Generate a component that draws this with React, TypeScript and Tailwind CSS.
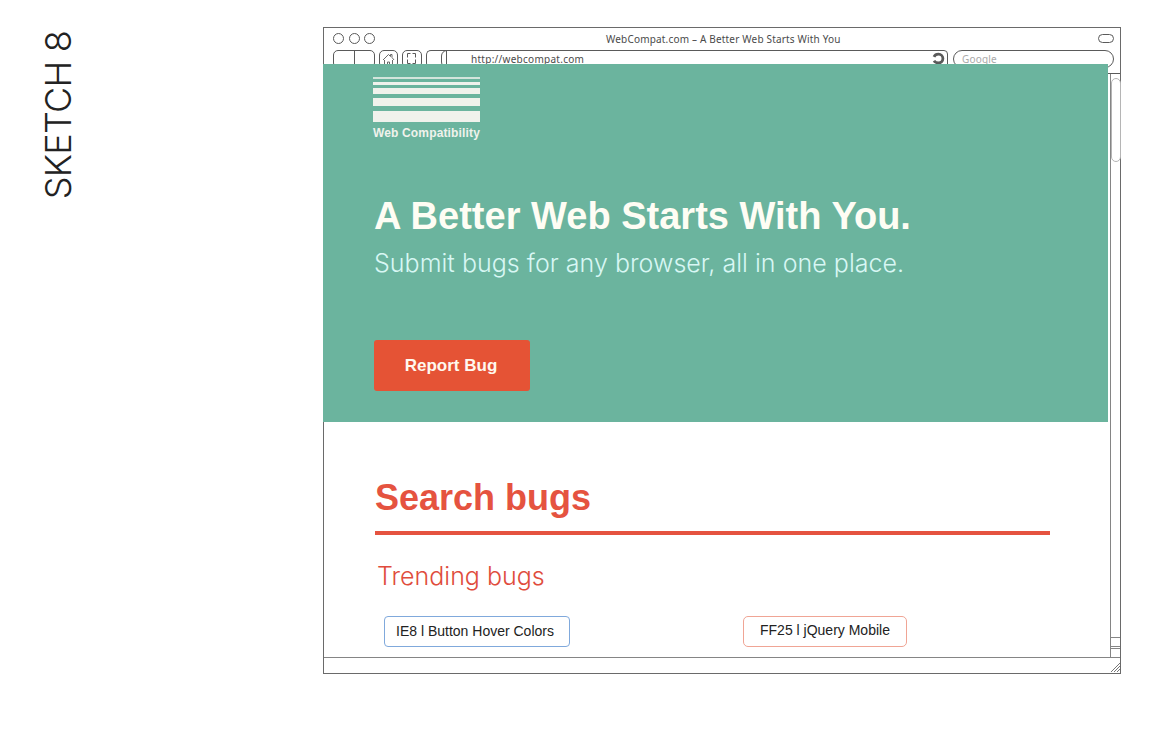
import React from "react";

const HELV = "font-['Liberation_Sans',Arial,sans-serif]";
const LIGHT = "font-['Inter',sans-serif] font-light";
const CHROME = "font-['Noto_Sans',sans-serif] text-[#4a4a4a]";

function TitleBar() {
  return (
    <div className="flex h-[22px] shrink-0 items-center justify-between pr-[6px] pl-[9px]">
      <div className="flex w-[273px] gap-[4.5px] pb-[2px]">
        <span className="size-[11px] rounded-full border border-[#5a5a5a]" />
        <span className="size-[11px] rounded-full border border-[#5a5a5a]" />
        <span className="size-[11px] rounded-full border border-[#5a5a5a]" />
      </div>
      <span className={`${CHROME} flex-1 text-[10px] leading-[22px] tracking-[0.18px] whitespace-nowrap`}>
        WebCompat.com – A Better Web Starts With You
      </span>
      <span className="mb-[2px] h-[9px] w-[16px] rounded-full border border-[#5a5a5a]" />
    </div>
  );
}

function Toolbar() {
  return (
    <div className="flex h-[24px] shrink-0 border-b border-[#5a5a5a] pl-[9px]">
      <div className="flex h-[18px] w-[42px] rounded-[5px] border border-[#5a5a5a]">
        <span className="w-[21px] border-r border-[#5a5a5a]" />
      </div>
      <div className="ml-[4px] h-[18px] w-[19px] rounded-[5px] border border-[#5a5a5a]">
        <svg viewBox="0 0 17 16" className="h-[16px] w-[17px]" fill="none" stroke="#5a5a5a">
          <path d="M3 9 8.500 3.500l2 2v-2H12v3L14 9M4.500 9v6M12.500 9v6M7.500 15v-4h2v4" strokeWidth=".9" />
        </svg>
      </div>
      <div className="ml-[4px] h-[18px] w-[20px] rounded-[5px] border border-[#5a5a5a]">
        <svg viewBox="0 0 18 16" className="h-[16px] w-[18px]" fill="none" stroke="#5a5a5a">
          <path d="M4.500 6.500v-4h3M9.500 2.500h3v4M4.500 8.500v4h3M9.500 12.500h3v-4" />
        </svg>
      </div>
      <div className="ml-[4px] h-[18px] w-[22px] rounded-l-[5px] border border-r-0 border-[#5a5a5a]" />
      <div className="-ml-[7px] flex h-[18px] w-[507px] rounded-l-[6px] rounded-r-[4px] border border-[#5a5a5a]">
        <span className="w-[5px] border-r border-[#5a5a5a]" />
        <span className={`${CHROME} ml-[24px] flex-1 text-[10px] leading-[17px] tracking-[0.27px]`}>
          http://webcompat.com
        </span>
        <svg viewBox="0 0 14 14" className="mt-[1px] mr-[1px] size-[14px]" fill="none" stroke="#5a5a5a">
          <path d="M2 4.800C3 2.600 5 2.200 6.500 2.200A4.400 4.400 0 0 1 6.500 11C4.500 11 3 10.300 2 8.800" strokeWidth="2.800" />
        </svg>
      </div>
      <div className="ml-[5px] flex h-[18px] w-[161px] rounded-full border border-[#5a5a5a] pl-[8px]">
        <span className="font-['Noto_Sans',sans-serif] text-[10px] leading-[17px] tracking-[0.2px] text-[#a9a9a9]">Google</span>
      </div>
    </div>
  );
}

function Logo() {
  return (
    <div className="w-[107px] text-[#f0f2ec]">
      <div className="flex flex-col">
        <span className="h-[2px] bg-[#d3e5dc]" />
        <span className="mt-[3px] h-[3px] bg-[#f0f2ec]" />
        <span className="mt-[3px] h-[6px] bg-[#f0f2ec]" />
        <span className="mt-[4px] h-[8px] bg-[#f0f2ec]" />
        <span className="mt-[5px] h-[11px] bg-[#f0f2ec]" />
      </div>
      <div className={`${HELV} mt-[4px] text-[12px] leading-[14px] font-bold tracking-[0.15px] whitespace-nowrap`}>
        Web Compatibility
      </div>
    </div>
  );
}

function Hero() {
  return (
    <section className="h-[358px] w-[785px] bg-[#6bb49e] pt-[13px] pl-[50px]">
      <Logo />
      <h1 className={`${HELV} mt-[54px] ml-px text-[38px] leading-[44px] font-bold tracking-[0.01px] whitespace-nowrap text-[#fefdf4]`}>
        A Better Web Starts With You.
      </h1>
      <p className={`${LIGHT} mt-[8px] ml-px text-[25px] leading-[34px] tracking-[0.03px] whitespace-nowrap text-[#d8f7f4]`}>
        Submit bugs for any browser, all in one place.
      </p>
      <button className={`${HELV} mt-[60px] ml-px h-[51px] w-[156px] rounded-[3px] bg-[#e55335] pr-[2px] text-[17px] font-bold text-[#fff8ee]`}>
        Report Bug
      </button>
    </section>
  );
}

function Bugs() {
  return (
    <section className="pl-[52px]">
      <h2 className={`${HELV} mt-[54px] text-[36px] leading-[44px] font-bold whitespace-nowrap text-[#e55340]`}>
        Search bugs
      </h2>
      <div className="mt-[11px] h-[4px] w-[675px] bg-[#e55340]" />
      <h3 className={`${LIGHT} mt-[24px] ml-[2px] text-[25px] leading-[34px] whitespace-nowrap text-[#e04c3c]`}>
        Trending bugs
      </h3>
      <div className={`${HELV} mt-[23px] ml-[9px] flex text-[14px] text-[#222222]`}>
        <div className="flex h-[31px] w-[186px] items-center rounded-[4px] border border-[#80a9dc] pl-[11px] whitespace-nowrap">
          IE8 l Button Hover Colors
        </div>
        <div className="ml-[173px] flex h-[31px] w-[164px] items-center rounded-[5px] border border-[#f0a595] pb-[2px] pl-[16px] whitespace-nowrap">
          FF25 l jQuery Mobile
        </div>
      </div>
    </section>
  );
}

function Scrollbar() {
  return (
    <aside className="flex w-[10px] flex-col border-l border-[#858585]">
      <div className="mt-[4px] h-[84px] w-[10px] rounded-full border border-[#b5b5b5]" />
      <div className="flex-1" />
      <div className="h-[10px] border-t border-b border-[#858585]" />
      <div className="mt-px h-[9px] border-t border-[#858585]" />
    </aside>
  );
}

export default function App() {
  return (
    <main className="flex h-[730px] w-[1150px] overflow-hidden bg-white">
      <div className="flex w-[323px] pt-[31px] pl-[35px]">
        <div className="h-[176px] w-[46px]">
          <p className={`${LIGHT} rotate-180 text-[36px] leading-[46px] tracking-[-0.75px] whitespace-nowrap text-[#222222] [writing-mode:vertical-rl]`}>
            SKETCH 8
          </p>
        </div>
      </div>
      <div className="mt-[27px] flex h-[647px] w-[798px] flex-col border border-[#6a6a6a]">
        <TitleBar />
        <Toolbar />
        <div className="flex min-h-0 flex-1">
          <div className="relative z-10 -mt-[10px] -ml-px w-[785px] shrink-0">
            <Hero />
            <Bugs />
          </div>
          <div className="w-[2px]" />
          <Scrollbar />
        </div>
        <div className="flex h-[16px] shrink-0 items-end justify-end border-t border-[#858585] pb-px">
          <svg viewBox="0 0 9 9" className="size-[9px]" fill="none" stroke="#777777">
            <path d="M0 9 9 0M3 9l6-6M6 9l3-3" />
          </svg>
        </div>
      </div>
    </main>
  );
}
